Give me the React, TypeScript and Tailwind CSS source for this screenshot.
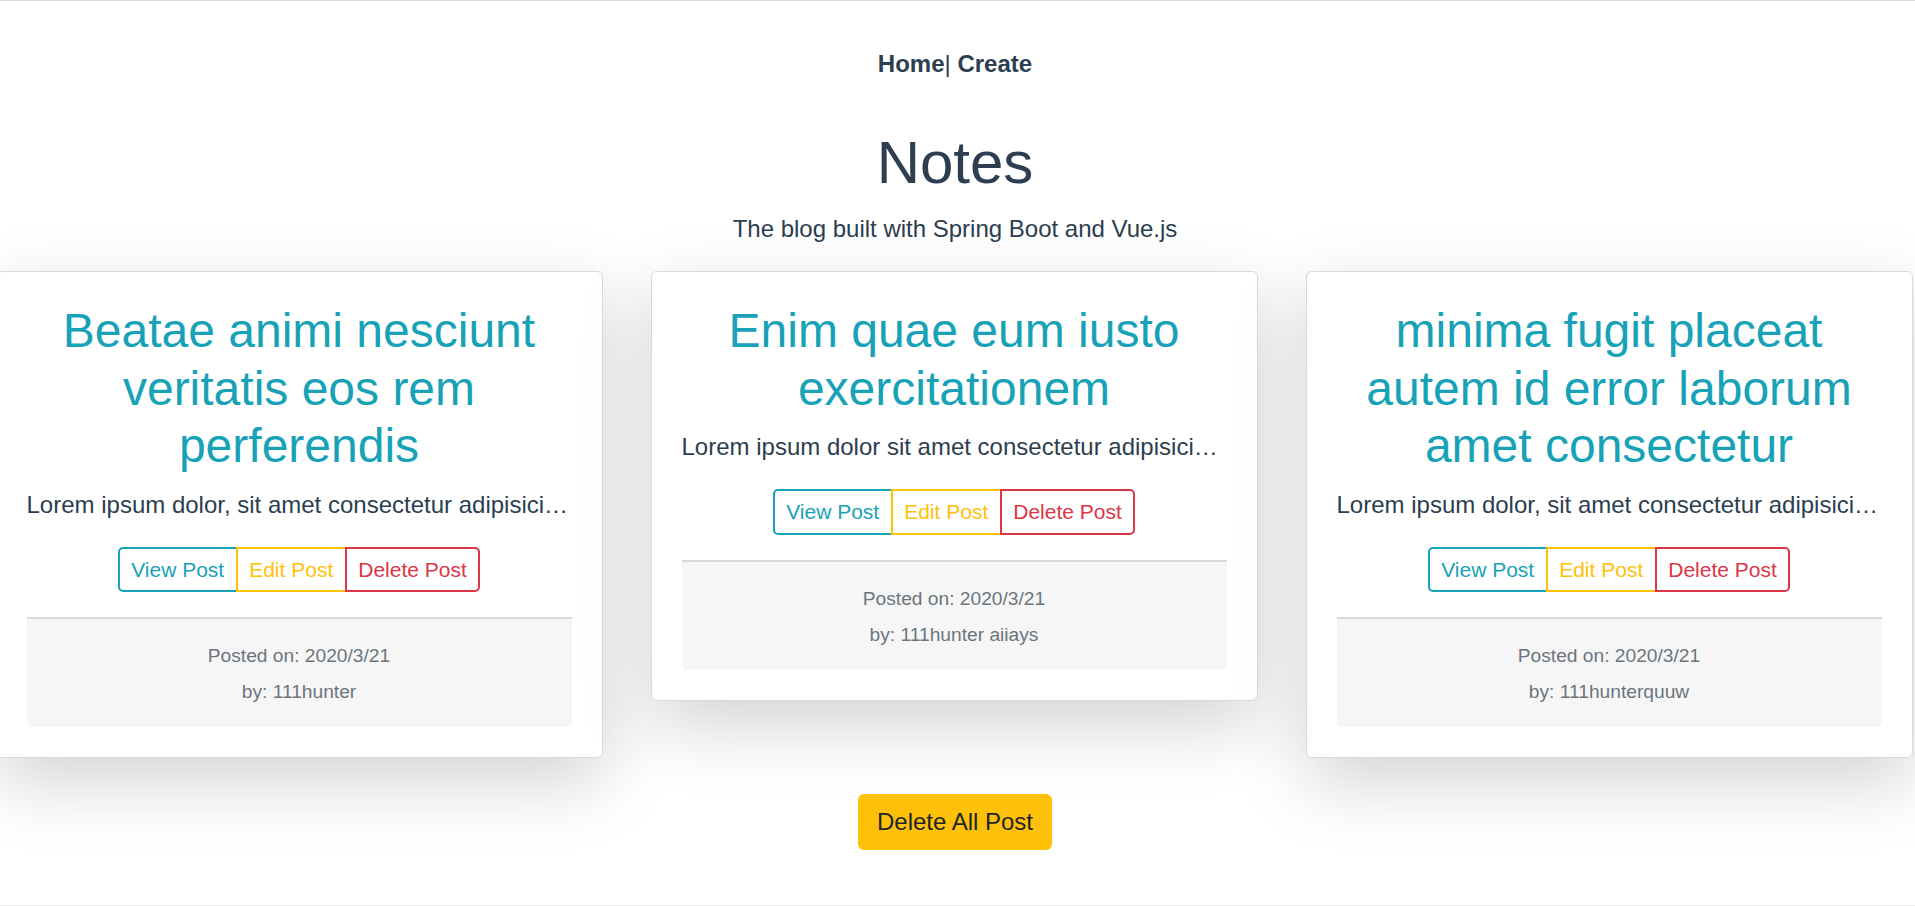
import React from "react";

type Post = { title: string; body: string; author: string };

const posts: Post[] = [
  {
    title: "Beatae animi nesciunt veritatis eos rem perferendis",
    body: "Lorem ipsum dolor, sit amet consectetur adipisicing elit. Quibusdam, voluptatum.",
    author: "111hunter",
  },
  {
    title: "Enim quae eum iusto exercitationem",
    body: "Lorem ipsum dolor sit amet consectetur adipisicing elit. Quibusdam, voluptatum.",
    author: "111hunter aiiays",
  },
  {
    title: "minima fugit placeat autem id error laborum amet consectetur",
    body: "Lorem ipsum dolor, sit amet consectetur adipisicing elit. Quibusdam, voluptatum.",
    author: "111hunterquuw",
  },
];

function Card({ post }: { post: Post }) {
  return (
    <div className="w-[607px] shrink-0 rounded-[6px] border border-[#d9d9d9] bg-white p-[30px] shadow-[0_24px_72px_rgba(0,0,0,0.175)]">
      <h2 className="mb-[12px] text-[48px] font-normal leading-[1.2] text-[#17a2b8]">{post.title}</h2>
      <p className="mb-[24px] truncate text-[24px] leading-[36px]">{post.body}</p>
      <div className="mb-[25px] flex justify-center">
        <button className="rounded-l-[5px] border-2 border-[#17a2b8] bg-white px-[11.5px] py-[5px] text-[21px] leading-[1.5] text-[#17a2b8]">
          View Post
        </button>
        <button className="-ml-[2px] border-2 border-[#ffc107] bg-white px-[11.5px] py-[5px] text-[21px] leading-[1.5] text-[#ffc107]">
          Edit Post
        </button>
        <button className="-ml-[2px] rounded-r-[5px] border-2 border-[#dc3545] bg-white px-[11.5px] py-[5px] text-[21px] leading-[1.5] text-[#dc3545]">
          Delete Post
        </button>
      </div>
      <div className="rounded-b-[5px] border-t-2 border-[#d9d9d9] bg-[#f6f6f6] py-[18px] text-[#6c757d]">
        <div className="pt-[2px] text-[19.2px] leading-[34px]">Posted on: 2020/3/21</div>
        <div className="pt-[2px] text-[19.2px] leading-[34px]">by: {post.author}</div>
      </div>
    </div>
  );
}

export default function App() {
  return (
    <div className="h-[906px] w-full overflow-hidden border-t border-b border-t-[#dadada] border-b-[#ececec] bg-white text-center font-['Liberation_Sans',Arial,Helvetica,sans-serif] text-[#2c3e50]">
      <div className="w-[1910px]">
        <nav className="py-[45px] text-[24px] leading-[36px]">
          <a className="font-bold text-[#2c3e50]">Home</a>| <a className="font-bold text-[#2c3e50]">Create</a>
        </nav>
        <h1 className="mb-[12px] text-[60px] font-normal leading-[1.2]">Notes</h1>
        <p className="mb-[24px] text-[24px] leading-[36px]">The blog built with Spring Boot and Vue.js</p>
        <div className="mr-[2px] flex items-start justify-center gap-[48px]">
          {posts.map((p) => (
            <Card key={p.title} post={p} />
          ))}
        </div>
        <div className="mt-[36px] flex justify-center">
          <button className="rounded-[6px] bg-[#ffc107] px-[19px] py-[10px] text-[24px] leading-[36px] text-[#212529]">
            Delete All Post
          </button>
        </div>
      </div>
    </div>
  );
}
